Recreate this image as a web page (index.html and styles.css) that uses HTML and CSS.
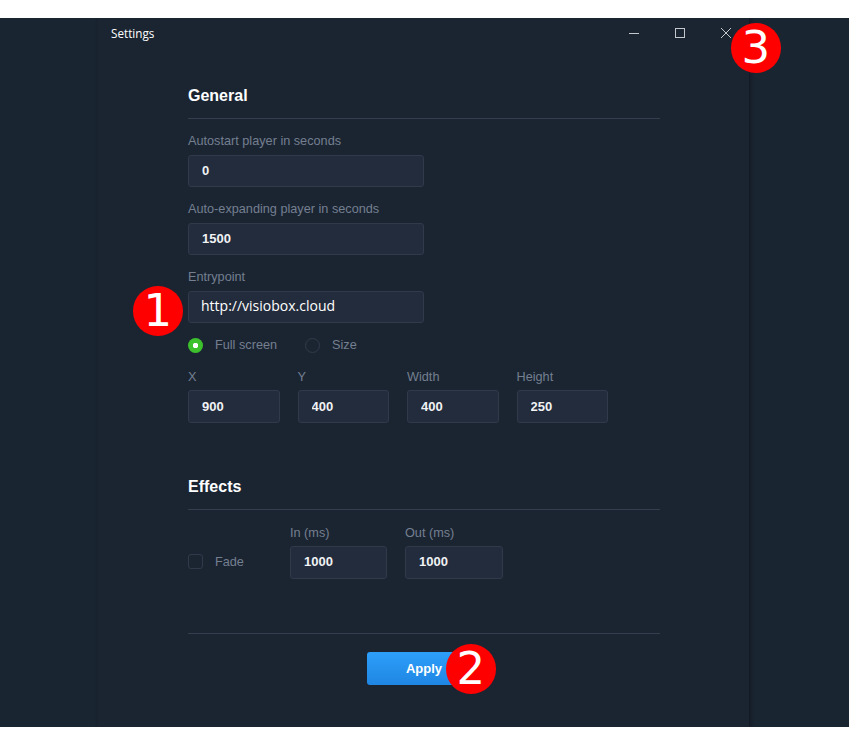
FILE: index.html
```html
<!DOCTYPE html>
<html lang="en">
<head>
    <meta charset="UTF-8">
    <title>Settings</title>
    <link rel="stylesheet" href="styles.css">
</head>
<body>
<div class="desktop">
  <div class="window">
    <!-- title bar -->
    <div class="titlebar">
      <span class="title">Settings</span>
      <div class="controls">
        <svg width="12" height="12" viewBox="0 0 12 12"><path d="M1 6.5H11" stroke="#c4c8cc" stroke-width="1"/></svg>
        <svg width="12" height="12" viewBox="0 0 12 12"><rect x="1.5" y="1.5" width="9" height="9" fill="none" stroke="#c4c8cc" stroke-width="1"/></svg>
        <svg width="12" height="12" viewBox="0 0 12 12"><path d="M1 1L11 11M11 1L1 11" stroke="#c4c8cc" stroke-width="1"/></svg>
      </div>
    </div>

    <div class="content">
      <h2 class="section-title">General</h2>
      <div class="field">
        <label>Autostart player in seconds</label>
        <input class="input" type="text" value="0">
      </div>
      <div class="field">
        <label>Auto-expanding player in seconds</label>
        <input class="input" type="text" value="1500">
      </div>
      <div class="field">
        <label>Entrypoint</label>
        <input class="input entry" type="text" value="http://visiobox.cloud">
      </div>

      <div class="radios">
        <span class="radio on"></span><span class="opt opt-first">Full screen</span>
        <span class="radio"></span><span class="opt">Size</span>
      </div>

      <div class="size-row">
        <div class="field"><label>X</label><input class="input" type="text" value="900"></div>
        <div class="field"><label>Y</label><input class="input" type="text" value="400"></div>
        <div class="field"><label>Width</label><input class="input" type="text" value="400"></div>
        <div class="field"><label>Height</label><input class="input" type="text" value="250"></div>
      </div>

      <h2 class="section-title effects">Effects</h2>
      <div class="fade-row">
        <div class="fade-check"><span class="check"></span><span class="opt">Fade</span></div>
        <div class="field"><label>In (ms)</label><input class="input" type="text" value="1000"></div>
        <div class="field"><label>Out (ms)</label><input class="input wide" type="text" value="1000"></div>
      </div>

      <div class="footer">
        <button class="apply">Apply</button>
      </div>
    </div>
  </div>

  <!-- numbered callouts -->
  <span class="badge badge-1">1</span>
  <span class="badge badge-2">2</span>
  <span class="badge badge-3">3</span>
</div>
</body>
</html>
```

FILE: styles.css
```css
html, body {
  margin: 0;
  padding: 0;
  background: #fff;
}

body {
  font-family: "Liberation Sans", Arial, sans-serif;
  padding: 18px 0 6px;
}

.desktop {
  position: relative;
  height: 709px;
  background: #1a2532;
  overflow: hidden;
}

.window {
  width: 651px;
  height: 709px;
  margin-left: 98px;
  background: #1b2532;
  box-shadow: 2px 0 3px rgba(15, 18, 28, 0.55), -1px 0 2px rgba(15, 18, 28, 0.08);
}

/* title bar */
.titlebar {
  display: flex;
  justify-content: space-between;
  align-items: center;
  height: 30px;
  padding: 0 17px 0 13px;
}

.title {
  font-family: "Open Sans", "Noto Sans", sans-serif;
  font-size: 11.7px;
  color: #fff;
}

.controls {
  display: flex;
  gap: 34px;
}

.controls svg {
  display: block;
}

/* form */
.content {
  width: 472px;
  margin-left: 90px;
  padding-top: 37px;
}

.section-title {
  margin: 0 0 14px;
  height: 33px;
  font-size: 16px;
  line-height: 22px;
  font-weight: bold;
  color: #fff;
  border-bottom: 1px solid #333e4e;
}

.section-title.effects {
  margin-top: 53px;
  margin-bottom: 15px;
}

.field {
  margin-bottom: 14px;
}

.field label {
  display: block;
  height: 16px;
  margin-bottom: 6px;
  font-size: 12.7px;
  line-height: 16px;
  color: #747f90;
}

.input {
  display: block;
  box-sizing: border-box;
  width: 236px;
  height: 32px;
  padding: 0 13px 1px;
  background: #232c3c;
  border: 1px solid #303a4a;
  border-radius: 3px;
  outline: none;
  color: #f0f2f4;
  font-family: "Liberation Sans", Arial, sans-serif;
  font-size: 13px;
  font-weight: bold;
}

.input.entry {
  padding-left: 12px;
  padding-bottom: 3px;
  font-family: "Open Sans", "Noto Sans", sans-serif;
  font-size: 14px;
  font-weight: normal;
  color: #fff;
}

.radios {
  display: flex;
  align-items: center;
  height: 16px;
}

.radio {
  box-sizing: border-box;
  width: 15px;
  height: 15px;
  border: 1px solid #303a4a;
  border-radius: 50%;
}

.radio.on {
  background: radial-gradient(circle, #fff 0 2.5px, #3cc12c 3px);
  border: none;
}

.opt {
  margin-left: 12px;
  font-size: 12.7px;
  color: #747f90;
}

.opt-first {
  margin-right: 28px;
}

.size-row {
  display: flex;
  gap: 18px;
  margin-top: 16px;
}

.size-row .field {
  margin-bottom: 0;
}

.size-row label,
.fade-row label {
  margin-bottom: 5px;
}

.size-row .input {
  width: 91.5px;
  height: 33px;
}

.fade-row {
  display: flex;
  align-items: flex-end;
  gap: 18px;
}

.fade-row .field {
  margin-bottom: 0;
}

.fade-row .input {
  width: 97px;
  height: 33px;
  padding-bottom: 3px;
}

.fade-row .input.wide {
  width: 98px;
}

.fade-check {
  display: flex;
  align-items: center;
  box-sizing: border-box;
  width: 84px;
  height: 33px;
  padding-bottom: 2px;
}

.check {
  box-sizing: border-box;
  width: 15px;
  height: 15px;
  border: 1px solid #303a4a;
  border-radius: 3px;
}

.footer {
  margin-top: 54px;
  padding-top: 18px;
  border-top: 1px solid #333e4e;
  text-align: center;
}

.apply {
  width: 114px;
  height: 33px;
  border: none;
  border-radius: 3px;
  background: linear-gradient(to bottom, #2d9ffa, #1f86e3);
  color: #fff;
  font-family: "Liberation Sans", Arial, sans-serif;
  font-size: 13px;
  font-weight: bold;
}

/* callouts */
.badge {
  position: absolute;
  width: 49.5px;
  height: 49.5px;
  border-radius: 50%;
  background: #fe0000;
  color: #fff;
  font-family: "DejaVu Sans", sans-serif;
  font-size: 45px;
  line-height: 50px;
  text-align: center;
}

.badge-1 {
  left: 133px;
  top: 268px;
}

.badge-2 {
  left: 446px;
  top: 626px;
}

.badge-3 {
  left: 731px;
  top: 5px;
}
```
